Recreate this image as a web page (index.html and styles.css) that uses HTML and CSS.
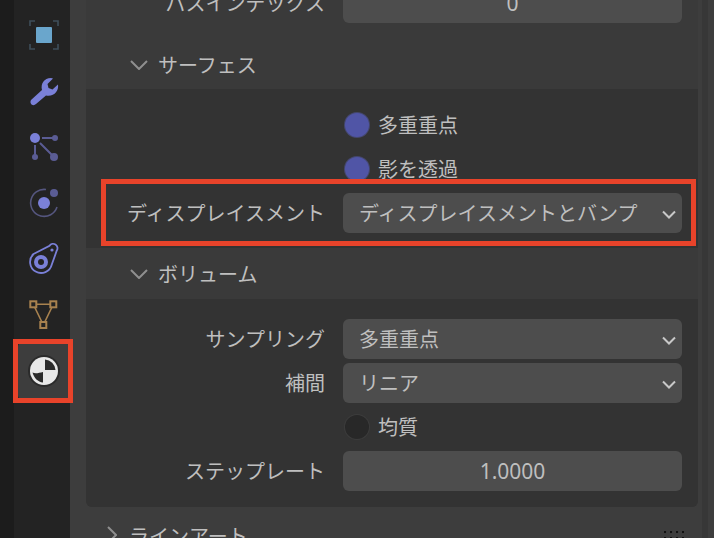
FILE: index.html
```html
<!DOCTYPE html>
<html lang="ja">

<head>
    <meta charset="UTF-8" />
    <title>マテリアル設定</title>
    <link rel="stylesheet" href="styles.css">
</head>

<body>
    <div class="editor">
        <div class="edge"></div>

        <nav class="tabs">
            <div class="tab">
                <svg viewBox="0 0 30 30" width="30" height="30">
                    <path d="M1 6V1H6M24 1H29V6M29 24V29H24M6 29H1V24" fill="none" stroke="#3f4f5b" stroke-width="1.6" />
                    <rect x="7" y="7" width="16" height="16" rx="1" fill="#6aa6cc" />
                </svg>
            </div>
            <div class="tab">
                <svg viewBox="0 0 30 30" width="30" height="30">
                    <path d="M2 24 13 14C11.500 8 15 2 22 2L24 2.500 18.500 8 19.500 12 23.500 13.500 29 8.500C30 15 25 21 17 19.500L7 28C4 31 0 27.500 2 24Z" fill="#7a80d8" />
                </svg>
            </div>
            <div class="tab">
                <svg viewBox="0 0 30 30" width="30" height="30">
                    <path d="M13 6H26M6 13V25M11 11 25 25" fill="none" stroke-width="2" stroke="#5a5c94" />
                    <circle cx="6" cy="6" r="5" fill="#7a80d8" />
                    <circle cx="26" cy="6" r="3" fill="#5a5c94" />
                    <circle cx="6" cy="25" r="3" fill="#5a5c94" />
                    <circle cx="25" cy="25" r="4" fill="#5a5c94" />
                </svg>
            </div>
            <div class="tab">
                <svg viewBox="0 0 30 30" width="30" height="30">
                    <path d="M17 1.500A13.500 13.500 0 1 0 28 19" fill="none" stroke="#55567f" stroke-width="1.600" />
                    <circle cx="15" cy="15" r="6" fill="#7a80d8" />
                    <circle cx="25" cy="5" r="4" fill="#5a5c94" />
                </svg>
            </div>
            <div class="tab">
                <svg class="tab-over" viewBox="0 0 30 30" width="30" height="30">
                    <path d="M4.500 10 20.500 1.800A4 4 0 0 1 27.800 6.500L22.800 20.500A11 11 0 1 1 4.500 10Z" fill="none" stroke="#7a80d8" stroke-width="1.800" />
                    <circle cx="12" cy="18" r="7" fill="#7a80d8" />
                    <circle cx="12" cy="18" r="3" fill="#232323" />
                    <circle cx="23" cy="6" r="1.600" fill="#7a80d8" />
                </svg>
            </div>
            <div class="tab">
                <svg viewBox="0 0 30 30" width="30" height="30">
                    <path d="M4.300 4.300H24.300L14.300 25Z" fill="none" stroke="#a8824f" stroke-width="1.600" />
                    <rect x="1.300" y="1.300" width="6" height="6" fill="#232323" stroke="#a8824f" stroke-width="2" />
                    <rect x="21.300" y="1.300" width="6" height="6" fill="#232323" stroke="#a8824f" stroke-width="2" />
                    <rect x="11.300" y="22" width="6" height="6" fill="#232323" stroke="#a8824f" stroke-width="2" />
                </svg>
            </div>
            <div class="tab tab-active">
                <svg class="tab-over" viewBox="0 0 30 30" width="30" height="30">
                    <circle cx="15" cy="15" r="16" fill="#2b2b2b" />
                    <circle cx="15" cy="15" r="14" fill="#e8e8e8" />
                    <path d="M16 3.500A11.500 11.500 0 0 1 26.500 14H16Z" fill="#2b2b2b" />
                    <path d="M3.500 16.500C6 18 10 17 14 16V26.500C9 26 5 22 3.500 16.500Z" fill="#2b2b2b" />
                </svg>
            </div>
        </nav>

        <main class="props">
            <section class="panel">
                <div class="row cut-row">
                    <div class="label">パスインデックス</div>
                    <div class="field field-num">0</div>
                </div>

                <div class="sub-head">
                    <svg class="arrow" viewBox="0 0 18 10" width="18" height="10"><path d="M1 1 9 9 17 1" /></svg>
                    サーフェス
                </div>
                <div class="sub-body surface">
                    <div class="row">
                        <div class="label"></div>
                        <div class="check check-on"></div>
                        <span class="check-text">多重重点</span>
                    </div>
                    <div class="row">
                        <div class="label"></div>
                        <div class="check check-on"></div>
                        <span class="check-text">影を透過</span>
                    </div>
                    <div class="row">
                        <div class="label">ディスプレイスメント</div>
                        <div class="field field-select">ディスプレイスメントとバンプ
                            <svg class="chev" viewBox="0 0 14 9" width="14" height="9"><path d="M1 1.500 7 7.500 13 1.500" /></svg>
                        </div>
                    </div>
                </div>

                <div class="sub-head">
                    <svg class="arrow" viewBox="0 0 18 10" width="18" height="10"><path d="M1 1 9 9 17 1" /></svg>
                    ボリューム
                </div>
                <div class="sub-body volume">
                    <div class="row">
                        <div class="label">サンプリング</div>
                        <div class="field field-select">多重重点
                            <svg class="chev" viewBox="0 0 14 9" width="14" height="9"><path d="M1 1.500 7 7.500 13 1.500" /></svg>
                        </div>
                    </div>
                    <div class="row">
                        <div class="label">補間</div>
                        <div class="field field-select">リニア
                            <svg class="chev" viewBox="0 0 14 9" width="14" height="9"><path d="M1 1.500 7 7.500 13 1.500" /></svg>
                        </div>
                    </div>
                    <div class="row">
                        <div class="label"></div>
                        <div class="check"></div>
                        <span class="check-text">均質</span>
                    </div>
                    <div class="row">
                        <div class="label">ステップレート</div>
                        <div class="field field-num">1.0000</div>
                    </div>
                </div>
            </section>

            <div class="next-head">
                <svg class="arrow-side" viewBox="0 0 10 18" width="10" height="18"><path d="M1 1 9 9 1 17" /></svg>
                ラインアート
                <div class="grip"></div>
            </div>
        </main>

        <div class="scroll"></div>

        <div class="mark mark-tab"></div>
        <div class="mark mark-row"></div>
    </div>
</body>

</html>
```

FILE: styles.css
```css
html,
body {
    margin: 0;
    padding: 0;
}

body {
    width: 714px;
    height: 538px;
    overflow: hidden;
    font-family: "Noto Sans CJK JP", "Noto Sans", sans-serif;
    font-size: 20px;
    color: #bfbfbf;
    background-color: #3d3d3d;
}

.editor {
    position: relative;
    display: flex;
    height: 538px;
    overflow: hidden;
}

.edge {
    width: 14px;
    background-color: #1c1c1c;
}

/* tab column */
.tabs {
    width: 56px;
    padding-top: 7px;
    display: flex;
    flex-direction: column;
    align-items: flex-start;
    background-color: #232323;
}

.tab {
    width: 52px;
    height: 56px;
    margin-left: 4px;
    padding-left: 11px;
    box-sizing: border-box;
    display: flex;
    align-items: center;
    flex: none;
}

.tab svg {
    overflow: visible;
}

.tab-active {
    background-color: #3d3d3d;
    border-radius: 4px 0 0 4px;
}

/* properties */
.props {
    width: 612px;
    margin-left: 16px;
    margin-top: -73px;
    flex: none;
}

.panel {
    border-radius: 0 0 6px 6px;
    overflow: hidden;
    background-color: #3a3a3a;
}

.row {
    display: flex;
    align-items: center;
    height: 40px;
    margin-bottom: 4px;
    line-height: 40px;
}

.row:last-child {
    margin-bottom: 0;
}

.cut-row {
    margin-top: 56px;
    margin-bottom: 0;
}

.label {
    width: 239px;
    flex: none;
    text-align: right;
    white-space: nowrap;
    margin-right: 18px;
}

.field {
    width: 339px;
    height: 40px;
    flex: none;
    box-sizing: border-box;
    background-color: #4d4d4d;
    border-radius: 6px;
    white-space: nowrap;
}

.field-num {
    text-align: center;
    font-family: "Noto Sans", sans-serif;
    font-size: 21px;
}

.field-select {
    display: flex;
    justify-content: space-between;
    align-items: center;
    padding: 0 6px 0 16px;
}

.chev {
    fill: none;
    stroke: #c8c8c8;
    stroke-width: 2;
    margin-top: 2px;
}

.check {
    width: 24px;
    height: 24px;
    flex: none;
    margin-left: 2px;
    border-radius: 50%;
    background-color: #282828;
    box-shadow: 0 0 0 1px #3c3c3c;
}

.check-on {
    background-color: #5055a6;
    box-shadow: 0 0 0 1px #45486f;
}

.check-text {
    margin-left: 9px;
}

.sub-head {
    height: 49px;
    display: flex;
    align-items: center;
    padding-left: 44px;
    gap: 10px;
    background-color: #3a3a3a;
}

.sub-head + .sub-body {
    background-color: #333333;
}

.surface {
    height: 159px;
    box-sizing: border-box;
    padding-top: 16px;
}

.volume {
    height: 208px;
    box-sizing: border-box;
    padding-top: 20px;
}

.cut-row + .sub-head {
    margin-top: 17px;
}

.surface + .sub-head {
    height: 51px;
}

.arrow,
.arrow-side {
    fill: none;
    stroke: #8f8f8f;
    stroke-width: 2;
    flex: none;
}

.next-head {
    height: 56px;
    display: flex;
    align-items: center;
    padding-left: 21px;
    gap: 12px;
}

.grip {
    width: 20px;
    height: 8px;
    margin-left: auto;
    margin-right: 14px;
    background-image: radial-gradient(circle at 1px 1px, #111111 1.2px, transparent 1.6px);
    background-size: 6px 6px;
}

.scroll {
    width: 6px;
    height: 538px;
    margin-left: 4px;
    flex: none;
    background-color: #373737;
}

/* red call-outs */
.mark {
    position: absolute;
    box-sizing: border-box;
    border: 5px solid #e8432a;
}

.mark-tab {
    left: 13px;
    top: 339px;
    width: 60px;
    height: 64px;
}

.mark-row {
    left: 101px;
    top: 179px;
    width: 595px;
    height: 67px;
}
```
